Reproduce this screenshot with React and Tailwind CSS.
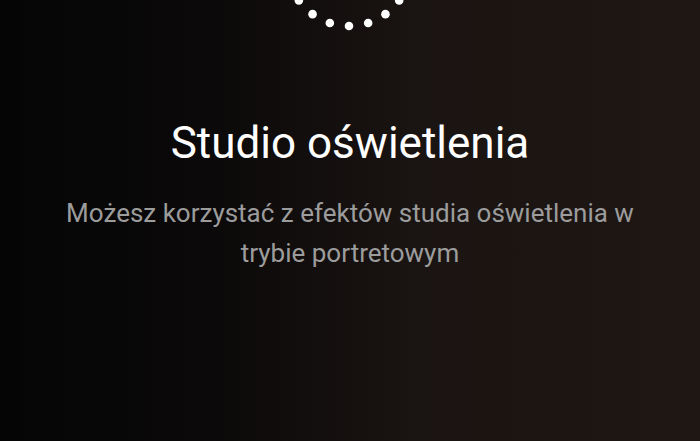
const dots = Array.from({ length: 20 }, (_, i) => {
  const a = (i * 18 * Math.PI) / 180;
  return { x: 349 + 62 * Math.sin(a), y: -36 + 62 * Math.cos(a) };
});

export default function App() {
  return (
    <div
      className="relative w-[700px] h-[441px] overflow-hidden bg-[linear-gradient(90deg,#050505_0%,#0b0909_30%,#1a1412_60%,#1e1714_100%)]"
      style={{ fontFamily: "Roboto, 'Noto Sans', sans-serif" }}
    >
      <svg className="absolute left-0 top-0" width="700" height="40">
        {dots.map((d, i) => (
          <circle key={i} cx={d.x} cy={d.y} r="4.3" fill="#ffffff" />
        ))}
      </svg>
      <div className="flex flex-col items-center pt-[113px] px-[30px] text-center">
        <h1 className="text-[44px] leading-[60px] text-white">Studio oświetlenia</h1>
        <p className="mt-[20px] text-[26px] leading-[40px] text-[#9c9c9c]">
          Możesz korzystać z efektów studia oświetlenia w
          <br />
          trybie portretowym
        </p>
      </div>
    </div>
  );
}
